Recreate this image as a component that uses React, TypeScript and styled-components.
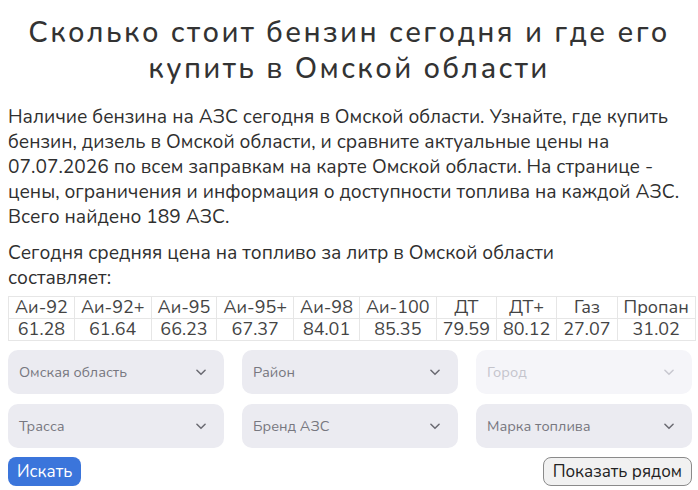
import React from "react";
import styled, { createGlobalStyle } from "styled-components";

const Global = createGlobalStyle`
  html, body { margin: 0; padding: 0; background: #fff; }
  body { font-family: "Nunito", "Lato", "Noto Sans", sans-serif; color: #2b2b2b; }
`;

const Page = styled.div`
  padding: 0 8px;
  width: 682px;
`;

const Title = styled.h1`
  margin: 15px 0 0;
  font-size: 29px;
  font-weight: 500;
  line-height: 36px;
  letter-spacing: 2.4px;
  text-align: center;
  color: #333;
`;

const Text = styled.p<{ $top: number }>`
  margin: ${(p) => p.$top}px 0 0;
  font-size: 19.2px;
  line-height: 25px;
  color: #2f2f2f;
  white-space: nowrap;
`;

const Table = styled.table`
  margin-top: 5px;
  width: 100%;
  border-collapse: collapse;
  font-size: 18px;
  color: #444;
`;

const Cell = styled.td`
  border: 1px solid #e6e6e6;
  text-align: center;
  padding: 0 6px;
  height: 21px;
  line-height: 21px;
  white-space: nowrap;
`;

const Filters = styled.div`
  margin-top: 9px;
  display: grid;
  grid-template-columns: repeat(3, 216px);
  column-gap: 18px;
  row-gap: 10px;
`;

const Select = styled.div<{ $disabled?: boolean }>`
  height: 44px;
  border-radius: 10px;
  background: ${(p) => (p.$disabled ? "#f5f5f9" : "#ebebf1")};
  display: flex;
  align-items: center;
  justify-content: space-between;
  padding: 0 16px 0 11px;
  font-size: 14.5px;
  color: ${(p) => (p.$disabled ? "#c4c4cc" : "#77777f")};
`;

const Chevron = styled.svg<{ $disabled?: boolean }>`
  width: 14px;
  height: 14px;
  color: ${(p) => (p.$disabled ? "#c8c8d0" : "#6a6a72")};
`;

const Actions = styled.div`
  margin-top: 9px;
  display: flex;
  justify-content: space-between;
  align-items: center;
`;

const Primary = styled.button`
  height: 29px;
  padding: 0 9px;
  border: none;
  border-radius: 8px;
  background: #3b75db;
  color: #fff;
  font-family: inherit;
  font-size: 17px;
`;

const Secondary = styled.button`
  height: 29px;
  padding: 0 9px;
  border: 1px solid #8a8a8a;
  border-radius: 8px;
  background: #f1f1f1;
  color: #222;
  font-family: inherit;
  font-size: 17px;
  margin-right: -2px;
`;

const fuels = ["Аи-92", "Аи-92+", "Аи-95", "Аи-95+", "Аи-98", "Аи-100", "ДТ", "ДТ+", "Газ", "Пропан"];
const prices = ["61.28", "61.64", "66.23", "67.37", "84.01", "85.35", "79.59", "80.12", "27.07", "31.02"];

const selects: { label: string; disabled?: boolean }[] = [
  { label: "Омская область" },
  { label: "Район" },
  { label: "Город", disabled: true },
  { label: "Трасса" },
  { label: "Бренд АЗС" },
  { label: "Марка топлива" },
];

export default function App() {
  return (
    <Page>
      <Global />
      <Title>
        Сколько стоит бензин сегодня и где его
        <br />
        купить в Омской области
      </Title>
      <Text $top={18}>
        Наличие бензина на АЗС сегодня в Омской области. Узнайте, где купить
        <br />
        бензин, дизель в Омской области, и сравните актуальные цены на
        <br />
        07.07.2026 по всем заправкам на карте Омской области. На странице -
        <br />
        цены, ограничения и информация о доступности топлива на каждой АЗС.
        <br />
        Всего найдено 189 АЗС.
      </Text>
      <Text $top={11}>
        Сегодня средняя цена на топливо за литр в Омской области
        <br />
        составляет:
      </Text>
      <Table>
        <tbody>
          <tr>
            {fuels.map((f) => (
              <Cell key={f}>{f}</Cell>
            ))}
          </tr>
          <tr>
            {prices.map((p, i) => (
              <Cell key={i}>{p}</Cell>
            ))}
          </tr>
        </tbody>
      </Table>
      <Filters>
        {selects.map((s) => (
          <Select key={s.label} $disabled={s.disabled}>
            <span>{s.label}</span>
            <Chevron $disabled={s.disabled} viewBox="0 0 24 24" fill="none" stroke="currentColor" strokeWidth={2.6} strokeLinecap="round" strokeLinejoin="round">
              <path d="M5 9l7 7 7-7" />
            </Chevron>
          </Select>
        ))}
      </Filters>
      <Actions>
        <Primary>Искать</Primary>
        <Secondary>Показать рядом</Secondary>
      </Actions>
    </Page>
  );
}
